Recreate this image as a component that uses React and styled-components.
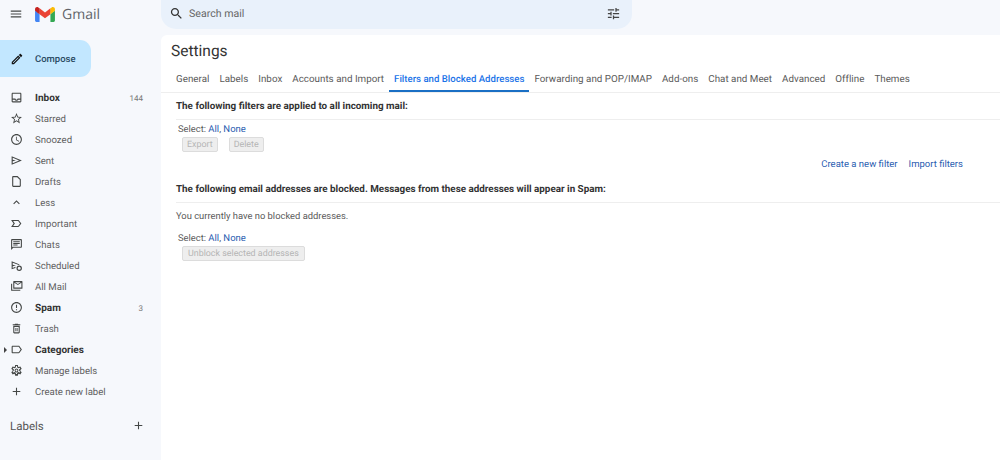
import React from "react";
import styled, { createGlobalStyle } from "styled-components";

const Global = createGlobalStyle`
  html, body { margin: 0; padding: 0; background: #f6f8fc; }
  body { font-family: Roboto, "Liberation Sans", sans-serif; color: #444746; overflow: hidden; text-rendering: geometricPrecision; }
`;

const Page = styled.div`display: flex; width: 1000px; height: 460px; overflow: hidden; background: #f6f8fc;`;
const Sidebar = styled.aside`width: 161px; flex: none; display: flex; flex-direction: column;`;
const Brand = styled.div`display: flex; align-items: center; height: 28px; padding-left: 9px;`;
const MenuBtn = styled.svg`width: 14px; height: 14px; fill: #444746; margin-right: 12px;`;
const Logo = styled.svg`width: 20px; height: 15px; margin-right: 7px;`;
const Wordmark = styled.span`font-family: "Open Sans", sans-serif; font-size: 14px; color: #5f6368;`;
const Compose = styled.button`
  display: flex; align-items: center; width: 91px; height: 37px; margin: 12px 0 10px; padding: 0 0 0 10px;
  border: 0; border-radius: 0 11px 11px 0; background: #c2e7ff; color: #2a4a63;
  font: 500 9.5px Roboto, sans-serif; text-rendering: geometricPrecision;
`;
const ComposeIcon = styled.svg`width: 14px; height: 14px; fill: #111; margin-right: 11px;`;
const ComposeText = styled.span`padding-top: 1px;`;
const NavList = styled.nav`display: flex; flex-direction: column;`;
const Row = styled.div`
  position: relative; display: flex; align-items: center; height: 21px; padding: 0 18px 0 10px;
  font-size: ${(p) => (p.$bold ? "10px" : "9.6px")}; font-weight: ${(p) => (p.$bold ? 700 : 400)}; color: ${(p) => (p.$bold ? "#333" : "#5f5f5f")};
`;
const RowText = styled.span`padding-top: 1px;`;
const NavIcon = styled.svg`width: 13px; height: 13px; flex: none; margin-right: 12px; fill: #444746;`;
const Caret = styled.span`
  position: absolute; left: 4px; top: 8px; width: 0; height: 0;
  border-left: 3px solid #444; border-top: 3px solid transparent; border-bottom: 3px solid transparent;
`;
const Count = styled.span`margin-left: auto; padding-top: 1px; font-size: 8px; font-weight: 400; color: #777;`;
const LabelsHead = styled.div`
  display: flex; align-items: center; justify-content: space-between; margin-top: 13px; padding: 0 16px 0 10px; height: 21px;
  font-size: 11.5px; color: #555;
`;
const PlusIcon = styled.svg`width: 13px; height: 13px; fill: #444746;`;

const Column = styled.div`flex: 1; display: flex; flex-direction: column; min-width: 0;`;
const SearchBar = styled.div`
  display: flex; align-items: center; width: 471px; height: 29px; padding: 0 11px 2px 8px; box-sizing: border-box;
  background: #e9f1fb; border-radius: 0 0 15px 15px; font-size: 10.6px; color: #666;
`;
const SearchIcon = styled.svg`width: 15px; height: 15px; fill: #333; margin-right: 5px;`;
const TuneIcon = styled.svg`width: 15px; height: 15px; fill: #444; margin-left: auto;`;
const Main = styled.main`flex: 1; margin-top: 6px; background: #fff; border-radius: 6px 0 0 0;`;
const Title = styled.h1`margin: 0; padding: 6px 0 0 10px; height: 23px; font-size: 15.5px; line-height: 20px; font-weight: 400; color: #333;`;
const Tabs = styled.div`display: flex; height: 27px; margin-top: 1px; padding-left: 10px; border-bottom: 1px solid #eee;`;
const Tab = styled.div`
  display: flex; align-items: center; height: 21px; padding: 4px 5px 0; white-space: nowrap;
  font-size: ${(p) => (p.$active ? "9.6px" : "9.8px")}; letter-spacing: 0.015px; color: ${(p) => (p.$active ? "#1a73e8" : "#5a5a5a")};
  font-weight: ${(p) => (p.$active ? 500 : 400)};
  border-bottom: 2px solid ${(p) => (p.$active ? "#1a6fc4" : "transparent")};
`;
const Section = styled.section`padding-left: 15px;`;
const Heading = styled.div`
  height: 26px; line-height: 28px; border-bottom: 1px solid #eee;
  font-size: 9.85px; font-weight: 700; color: #333; white-space: nowrap;
`;
const SelectLine = styled.div`margin-top: ${(p) => p.$mt || 0}px; padding-left: 2px; height: 16px; line-height: 17px; font-size: 9.4px; color: #5a5a5a;`;
const Link = styled.span`color: #2a5db0; font-size: 9.5px;`;
const BtnRow = styled.div`display: flex; gap: 11px; padding-left: 6px;`;
const Disabled = styled.div`
  height: 15px; line-height: 14px; padding: 0 ${(p) => p.$pad || 4}px; box-sizing: border-box; border: 1px solid #dcdcdc; border-radius: 2px;
  background: #eeeeee; color: #b5b5b5; font-size: 8.9px; white-space: nowrap;
`;
const FilterLinks = styled.div`display: flex; justify-content: flex-end; gap: 11px; padding: 5px 37px 0 0; height: 19px; line-height: 16px;`;
const Note = styled.div`height: 27px; line-height: 28px; font-size: 9.4px; color: #5a5a5a;`;

const P = {
  inbox: "M19 3H5c-1.1 0-2 .9-2 2v14c0 1.1.9 2 2 2h14c1.1 0 2-.9 2-2V5c0-1.1-.9-2-2-2zm0 16H5v-3h3.56c.69 1.19 1.97 2 3.45 2s2.75-.81 3.45-2H19v3zm0-5h-4.99c0 1.1-.9 2-2 2s-2-.9-2-2H5V5h14v9z",
  star: "M22 9.24l-7.19-.62L12 2 9.19 8.63 2 9.24l5.46 4.73L5.82 21 12 17.27 18.18 21l-1.63-7.03L22 9.24zM12 15.4l-3.76 2.27 1-4.28-3.32-2.88 4.38-.38L12 6.1l1.71 4.04 4.38.38-3.32 2.88 1 4.28L12 15.4z",
  clock: "M11.99 2C6.47 2 2 6.48 2 12s4.47 10 9.99 10C17.52 22 22 17.52 22 12S17.52 2 11.99 2zM12 20c-4.42 0-8-3.58-8-8s3.58-8 8-8 8 3.58 8 8-3.58 8-8 8zm.5-13H11v6l5.25 3.15.75-1.23-4.5-2.67z",
  sent: "M3 20V4l19 8-19 8zm2-3l11.85-5L5 7v3.5l6 1.5-6 1.5V17z",
  draft: "M6 2c-1.1 0-2 .9-2 2v16c0 1.1.9 2 2 2h12c1.1 0 2-.9 2-2V8l-6-6H6zm0 18V4h7.17L18 8.83V20H6z",
  less: "M12 8l-6 6 1.41 1.41L12 10.83l4.59 4.58L18 14z",
  important: "M2 18.5l4.5-6.5L2 5.5h13c.65 0 1.26.31 1.63.84L21 12l-4.37 5.66c-.37.53-.98.84-1.63.84H2zm3.8-2H15l3.5-4.5L15 7.5H5.8L9 12l-3.2 4.5z",
  chat: "M20 2H4c-1.1 0-2 .9-2 2v18l4-4h14c1.1 0 2-.9 2-2V4c0-1.1-.9-2-2-2zm0 14H5.2L4 17.2V4h16v12zM6 12h8v2H6zm0-3h12v2H6zm0-3h12v2H6z",
  scheduled: "M3 19V4l15 6.3-1.9.9L5 7v3.5l6 1.5-6 1.5V16.5l5-2.1V16.6L3 19zM17 12a5 5 0 1 0 0 10 5 5 0 0 0 0-10zm0 7.8a2.8 2.8 0 1 1 0-5.6 2.8 2.8 0 0 1 0 5.6z",
  allmail: "M7 2h15c.6 0 1 .4 1 1v12c0 .6-.4 1-1 1H7c-.6 0-1-.4-1-1V3c0-.6.4-1 1-1zm1 3.2V14h13V5.2l-6.5 4.2L8 5.2zM9.2 4l5.3 3.4L19.8 4H9.2zM2 7h2v11h15v2H3c-.6 0-1-.4-1-1V7z",
  spam: "M11 15h2v2h-2zm0-8h2v6h-2zm.99-5C6.47 2 2 6.48 2 12s4.47 10 9.99 10C17.52 22 22 17.52 22 12S17.52 2 11.99 2zM12 20c-4.42 0-8-3.58-8-8s3.58-8 8-8 8 3.58 8 8-3.58 8-8 8z",
  trash: "M6 19c0 1.1.9 2 2 2h8c1.1 0 2-.9 2-2V7H6v12zM8 9h8v10H8V9zm7.5-5l-1-1h-5l-1 1H5v2h14V4h-3.5zM10 11v6h1.5v-6zm2.5 0v6H14v-6z",
  label: "M17.63 5.84C17.27 5.33 16.67 5 16 5L5 5.01C3.9 5.01 3 5.9 3 7v10c0 1.1.9 1.99 2 1.99L16 19c.67 0 1.27-.33 1.63-.84L22 12l-4.37-6.16zM16 17H5V7h11l3.55 5L16 17z",
  gear: "M12 15.5a3.5 3.5 0 1 1 0-7 3.5 3.5 0 0 1 0 7zm0-5.2a1.7 1.7 0 1 0 0 3.4 1.7 1.7 0 0 0 0-3.4zM9.5 2h5l.5 3 1.2.7 2.9-1.1 2.5 4.3-2.4 2 .1 1.1-.1 1 2.4 2-2.5 4.3-2.9-1.1-1.2.7-.5 3h-5l-.5-3-1.2-.7-2.9 1.1-2.5-4.3 2.4-2-.1-1 .1-1.1-2.4-2 2.5-4.3 2.9 1.1 1.2-.7.5-3zm1.6 1.9l-.4 2.5-2.3 1.3-2.4-.9-.9 1.5 2 1.6-.1 2.6-2 1.6.9 1.5 2.4-.9 2.3 1.3.4 2.5h1.8l.4-2.5 2.3-1.3 2.4.9.9-1.5-2-1.6.1-2.6 2-1.6-.9-1.5-2.4.9-2.3-1.3-.4-2.5h-1.8z",
  plus: "M19 13h-6v6h-2v-6H5v-2h6V5h2v6h6v2z",
};

const nav = [
  ["inbox", "Inbox", true, "144"], ["star", "Starred"], ["clock", "Snoozed"], ["sent", "Sent"], ["draft", "Drafts"],
  ["less", "Less"], ["important", "Important"], ["chat", "Chats"], ["scheduled", "Scheduled"], ["allmail", "All Mail"],
  ["spam", "Spam", true, "3"], ["trash", "Trash"], ["label", "Categories", true, null, true], ["gear", "Manage labels"], ["plus", "Create new label"],
];
const tabs = ["General", "Labels", "Inbox", "Accounts and Import", "Filters and Blocked Addresses", "Forwarding and POP/IMAP", "Add-ons", "Chat and Meet", "Advanced", "Offline", "Themes"];

function SelectAllNone({ mt }) {
  return <SelectLine $mt={mt}>Select: <Link>All</Link>, <Link>None</Link></SelectLine>;
}

export default function App() {
  return (
    <Page>
      <Global />
      <Sidebar>
        <Brand>
          <MenuBtn viewBox="0 0 24 24"><path d="M3 18h18v-2H3v2zm0-5h18v-2H3v2zm0-7v2h18V6H3z" /></MenuBtn>
          <Logo viewBox="0 0 256 193">
            <path fill="#4285F4" d="M58.182 192.05V93.14L27.507 65.077 0 49.504v125.091c0 9.658 7.825 17.455 17.455 17.455h40.727Z" />
            <path fill="#34A853" d="M197.818 192.05h40.727c9.659 0 17.455-7.826 17.455-17.455V49.505l-31.156 17.837-27.026 25.798v98.91Z" />
            <path fill="#EA4335" d="m58.182 93.14-4.174-38.647 4.174-36.989L128 69.868l69.818-52.364 4.67 34.992-4.67 40.644L128 145.504z" />
            <path fill="#FBBC04" d="M197.818 17.504V93.14L256 49.504V26.231c0-21.585-24.64-33.89-41.89-20.945l-16.292 12.218Z" />
            <path fill="#C5221F" d="m0 49.504 26.759 20.07L58.182 93.14V17.504L41.89 5.286C24.61-7.66 0 4.646 0 26.23v23.273Z" />
          </Logo>
          <Wordmark>Gmail</Wordmark>
        </Brand>
        <Compose>
          <ComposeIcon viewBox="0 0 24 24"><path d="M3 17.25V21h3.75L17.81 9.94l-3.75-3.75L3 17.25zM5.92 19H5v-.92l9.06-9.06.92.92L5.92 19zM20.71 5.63l-2.34-2.34c-.2-.2-.45-.29-.71-.29s-.51.1-.7.29l-1.83 1.83 3.75 3.75 1.83-1.83c.39-.39.39-1.02 0-1.41z" /></ComposeIcon>
          <ComposeText>Compose</ComposeText>
        </Compose>
        <NavList>
          {nav.map(([icon, text, bold, count, caret]) => (
            <Row key={text} $bold={bold}>
              {caret && <Caret />}
              <NavIcon viewBox="0 0 24 24"><path fillRule="evenodd" d={P[icon]} /></NavIcon>
              <RowText>{text}</RowText>
              {count && <Count>{count}</Count>}
            </Row>
          ))}
        </NavList>
        <LabelsHead>
          Labels
          <PlusIcon viewBox="0 0 24 24"><path d={P.plus} /></PlusIcon>
        </LabelsHead>
      </Sidebar>
      <Column>
        <SearchBar>
          <SearchIcon viewBox="0 0 24 24"><path d="M15.5 14h-.79l-.28-.27C15.41 12.59 16 11.11 16 9.5 16 5.91 13.09 3 9.5 3S3 5.91 3 9.5 5.91 16 9.5 16c1.61 0 3.09-.59 4.23-1.57l.27.28v.79l5 4.99L20.49 19l-4.99-5zm-6 0C7.01 14 5 11.99 5 9.5S7.01 5 9.5 5 14 7.01 14 9.5 11.99 14 9.5 14z" /></SearchIcon>
          Search mail
          <TuneIcon viewBox="0 0 24 24"><path d="M3 17v2h6v-2H3zM3 5v2h10V5H3zm10 16v-2h8v-2h-8v-2h-2v6h2zM7 9v2H3v2h4v2h2V9H7zm14 4v-2H11v2h10zm-6-4h2V7h4V5h-4V3h-2v6z" /></TuneIcon>
        </SearchBar>
        <Main>
          <Title>Settings</Title>
          <Tabs>
            {tabs.map((t) => <Tab key={t} $active={t.startsWith("Filters")}>{t}</Tab>)}
          </Tabs>
          <Section>
            <Heading>The following filters are applied to all incoming mail:</Heading>
            <SelectAllNone mt={1} />
            <BtnRow><Disabled>Export</Disabled><Disabled>Delete</Disabled></BtnRow>
            <FilterLinks><Link>Create a new filter</Link><Link>Import filters</Link></FilterLinks>
            <Heading>The following email addresses are blocked. Messages from these addresses will appear in Spam:</Heading>
            <Note>You currently have no blocked addresses.</Note>
            <SelectAllNone />
            <BtnRow><Disabled $pad={5}>Unblock selected addresses</Disabled></BtnRow>
          </Section>
        </Main>
      </Column>
    </Page>
  );
}
